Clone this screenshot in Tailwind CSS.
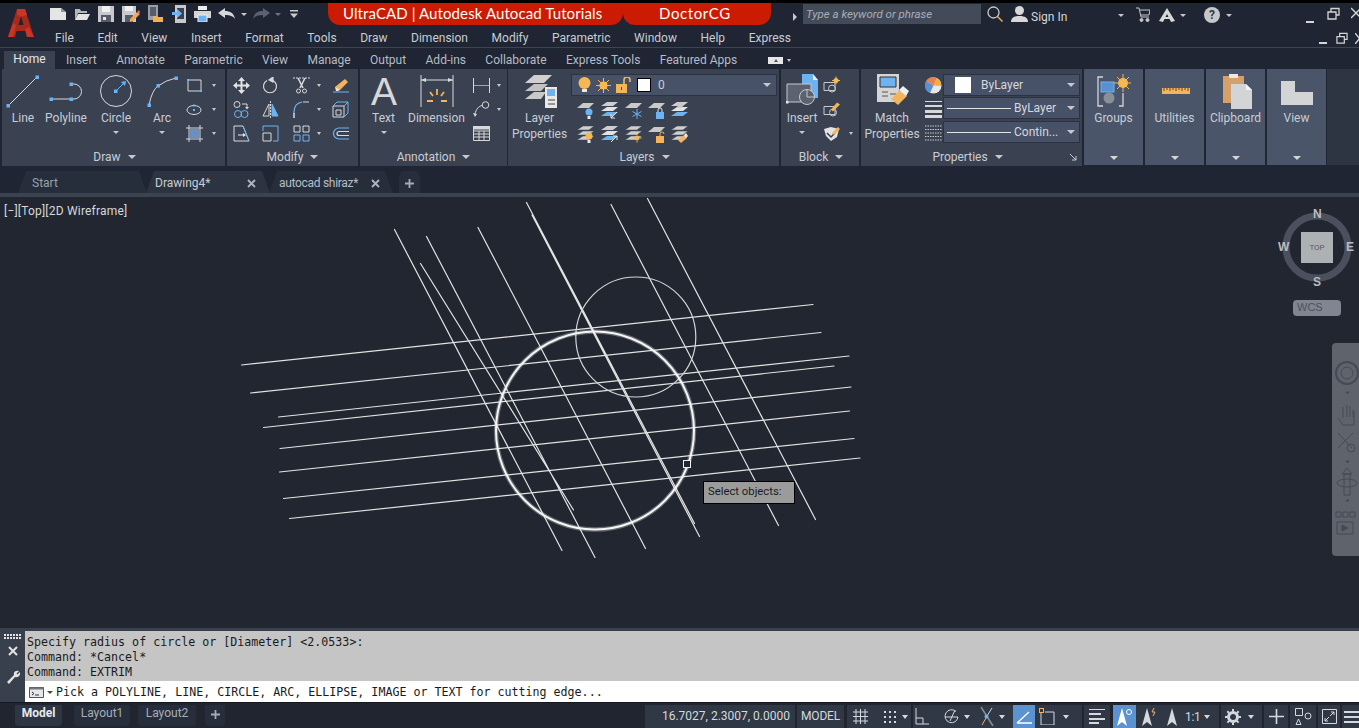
<!DOCTYPE html>
<html lang="en">
<head>
<meta charset="utf-8">
<title>AutoCAD</title>
<script src="https://cdn.jsdelivr.net/npm/@tailwindcss/browser@4"></script>
</head>
<body class="m-0 bg-[#212630]">
<svg width="0" height="0" class="absolute">
  <symbol id="slab" viewBox="0 0 17 17"><path d="M6 1h11l-5 5H0z" fill="#c9c9c9"/></symbol>
  <symbol id="stack" viewBox="0 0 17 17"><path d="M6 0h11l-5 4H0zM6 5h11l-5 4H0zM6 10h11l-5 4H0z" fill="#cfcfcf" stroke="#3a4252" stroke-width=".5"/></symbol>
  <symbol id="stackblue" viewBox="0 0 17 17"><path d="M6 0h11l-5 4H0z" fill="#cfcfcf"/><path d="M6 5h11l-5 4H0z" fill="#e3e3e3"/><path d="M6 10h11l-5 4H0z" fill="#6db3f2"/></symbol>
</svg>
<div class="relative w-[1359px] h-[728px] overflow-hidden flex flex-col bg-[#212630] text-[12px] leading-[16px] text-[#c8cdd5] font-['Roboto',sans-serif]">

  <!-- title + menu -->
  <div class="h-[3px] bg-black shrink-0"></div>
  <header class="flex h-[44px] shrink-0 bg-[#1f2532]">
    <div class="w-[50px] shrink-0 pl-[7px] pt-[5px]">
      <svg width="28" height="30" viewBox="0 0 28 30"><path d="M1 29 10 1h8l9 28h-7l-1.500-6h-9L8 29z" fill="#a9281c"/><path d="M11.500 17h5L14 8z" fill="#1f2532"/><path d="M10 1h8l2 6-7 2-3-3zM1 29l5-14 3 2-3 12zM20 29l-2-8 4-2 5 10z" fill="#c93527"/></svg>
    </div>
    <div class="flex-1 flex flex-col min-w-0">
      <div class="h-[23px] flex items-start relative whitespace-nowrap">
        <div class="flex items-center h-[22px] shrink-0">
          <svg class="w-[16px] h-[14px]" viewBox="0 0 16 14"><path d="M0 1h11l5 4v8H0z" fill="#e5e5e5"/><path d="M11 1l5 4h-5z" fill="#8f9299"/></svg>
          <svg class="w-[16px] h-[14px] ml-[8px]" viewBox="0 0 16 14"><path d="M1 2h5l1 2h6v2H4L1 13z" fill="#b5b7ba"/><path d="M4 7h12l-3 6H1z" fill="#e3e3e3"/></svg>
          <svg class="w-[16px] h-[16px] ml-[8px]" viewBox="0 0 16 16"><path d="M0 0h16v16H0z" fill="#c7c9cc"/><path d="M4 0h8v6H4z" fill="#f0f0f0"/><path d="M3 9h10v7H3z" fill="#565c68"/><path d="M5 11h3v3H5z" fill="#e5e5e5"/></svg>
          <svg class="w-[18px] h-[16px] ml-[8px]" viewBox="0 0 18 16"><path d="M0 0h14v16H0z" fill="#c7c9cc"/><path d="M3 0h8v5H3z" fill="#f0f0f0"/><path d="M3 9h8v7H3z" fill="#565c68"/><path d="M8 13l7-7 3 2-7 7-3 1z" fill="#f2a65a"/><path d="M15 6l2-2 1 2-1 2z" fill="#e06b60"/></svg>
          <svg class="w-[15px] h-[18px] ml-[8px]" viewBox="0 0 15 18"><path d="M0 0h10v15H0z" fill="#9a9da3"/><path d="M2 2h6v9H2z" fill="#565c68"/><path d="M5 11h4l1 1h5v5H5z" fill="#f2b04f"/></svg>
          <svg class="w-[14px] h-[18px] ml-[9px]" viewBox="0 0 14 18"><path d="M3 0h11v18H3z" fill="#c7c9cc"/><path d="M5 3h7v11H5z" fill="#3a4252"/><path d="M0 7h5V4l5 4.500-5 4.500v-3H0z" fill="#6db3f2"/></svg>
          <svg class="w-[17px] h-[16px] ml-[8px]" viewBox="0 0 17 16"><path d="M4 0h9v4H4z" fill="#eee"/><path d="M0 5h17v7H0z" fill="#d5d5d5"/><path d="M4 9h9v7H4z" fill="#6db3f2" stroke="#eee"/></svg>
          <svg class="w-[17px] h-[12px] ml-[7px]" viewBox="0 0 17 12"><path d="M0 5 7 0v3c5 0 9 2 10 8-2-3-5-4-10-4v3z" fill="#d5d7da"/></svg>
          <span class="w-0 h-0 ml-[6px] border-x-[3px] border-x-transparent border-t-[3px] border-t-[#c8c8c8]"></span>
          <svg class="w-[17px] h-[12px] ml-[6px] -scale-x-100" viewBox="0 0 17 12"><path d="M0 5 7 0v3c5 0 9 2 10 8-2-3-5-4-10-4v3z" fill="#5a6270"/></svg>
          <span class="w-0 h-0 ml-[5px] border-x-[3px] border-x-transparent border-t-[3px] border-t-[#6d7481]"></span>
          <svg class="w-[8px] h-[8px] ml-[9px]" viewBox="0 0 8 8"><path d="M0 0h8v1.500H0z" fill="#c8c8c8"/><path d="M0 3.500h8L4 8z" fill="#c8c8c8"/></svg>
        </div>
        <div class="ml-[30px] w-[295px] shrink-0 h-[22px] bg-[#cb1b02] rounded-b-[12px] pl-[15px] text-white text-[15px] leading-[21px] font-['Lato',sans-serif] tracking-[.1px]">UltraCAD | Autodesk Autocad Tutorials</div>
        <div class="w-[148px] shrink-0 h-[22px] bg-[#cb1b02] rounded-b-[12px] pl-[36px] text-white text-[15px] leading-[21px] font-['Lato',sans-serif] tracking-[.6px]">DoctorCG</div>
        <span class="ml-[22px] mt-[10px] w-0 h-0 border-y-[4px] border-y-transparent border-l-[4px] border-l-[#c8c8c8]"></span>
        <div class="ml-[6px] mt-[1px] w-[178px] shrink-0 h-[20px] bg-[#434b59] pl-[3px] italic text-[11.500px] leading-[20px] text-[#a9aeb6]">Type a keyword or phrase</div>
        <svg class="ml-[6px] mt-[3px] w-[16px] h-[16px] shrink-0" viewBox="0 0 16 16" fill="none"><circle cx="6.500" cy="6.500" r="5.500" stroke="#c8c8c8" stroke-width="1.300"/><path d="m10.500 10.500 5 5" stroke="#f0a94f" stroke-width="1.500"/></svg>
        <svg class="ml-[8px] mt-[3px] w-[17px] h-[16px] shrink-0" viewBox="0 0 17 16"><circle cx="8.500" cy="4.500" r="4.500" fill="#d8d8d8"/><path d="M0 16c0-4 3-6 8.500-6S17 12 17 16z" fill="#d8d8d8"/></svg>
        <span class="ml-[3px] mt-[6px] w-[38px] shrink-0 leading-[16px] text-[#d5d8dc]">Sign In</span>
        <span class="ml-[49px] mt-[11px] w-0 h-0 border-x-[3px] border-x-transparent border-t-[3px] border-t-[#c8c8c8]"></span>
        <svg class="ml-[12px] mt-[4px] w-[14px] h-[15px] shrink-0" viewBox="0 0 14 15" fill="none" stroke="#c8c8c8"><path d="M0 1h3l2 9h8M4 3h10l-1 5H5"/><circle cx="5.500" cy="13" r="1.500" fill="#c8c8c8"/><circle cx="11.500" cy="13" r="1.500" fill="#c8c8c8"/></svg>
        <svg class="ml-[9px] mt-[5px] w-[16px] h-[14px] shrink-0" viewBox="0 0 16 14"><path d="M8 0 0 13l4 1 4-8 4 8 4-1z" fill="#d8d8d8"/><path d="M3 9h10v2H3z" fill="#d8d8d8"/></svg>
        <span class="ml-[5px] mt-[11px] w-0 h-0 border-x-[3px] border-x-transparent border-t-[3px] border-t-[#c8c8c8]"></span>
        <span class="ml-[10px] mt-[2px] w-px h-[18px] bg-[#4b5362]"></span>
        <span class="ml-[8px] mt-[4px] w-[16px] h-[16px] shrink-0 rounded-full bg-[#c5c7ca] text-[#333a47] text-[12px] leading-[16px] font-bold text-center">?</span>
        <span class="ml-[6px] mt-[11px] w-0 h-0 border-x-[3px] border-x-transparent border-t-[3px] border-t-[#c8c8c8]"></span>
        <svg class="ml-[71px] mt-[6px] w-[12px] h-[14px] shrink-0" viewBox="0 0 12 14"><path d="M3 13h8" stroke="#d5d5d5" stroke-width="2"/></svg>
        <svg class="ml-[12px] mt-[4px] w-[13px] h-[13px] shrink-0" viewBox="0 0 13 13" fill="none" stroke="#d5d5d5" stroke-width="1.300"><path d="M1 5h8v7H1zM4 5V1.500h8V8H9"/></svg>
        <svg class="ml-[11px] mt-[4px] w-[10px] h-[12px] shrink-0" viewBox="0 0 10 12" stroke="#d5d5d5" stroke-width="1.500"><path d="M0 1l10 10M10 1 0 11"/></svg>
      </div>
      <div class="h-[21px] flex items-start gap-[23.600px] pl-[5px] pt-[4px] relative">
        <span>File</span><span>Edit</span><span>View</span><span>Insert</span><span>Format</span><span>Tools</span><span>Draw</span><span>Dimension</span><span>Modify</span><span>Parametric</span><span>Window</span><span>Help</span><span>Express</span>
        <div class="ml-auto mt-[2px] flex items-center">
          <svg class="w-[9px] h-[12px]" viewBox="0 0 9 12"><path d="M0 11h8" stroke="#d5d5d5" stroke-width="2"/></svg>
          <svg class="ml-[8px] w-[12px] h-[12px]" viewBox="0 0 13 13" fill="none" stroke="#d5d5d5" stroke-width="1.300"><path d="M1 5h8v7H1zM4 5V1.500h8V8H9"/></svg>
          <svg class="ml-[7px] w-[4px] h-[11px]" viewBox="0 0 4 11" stroke="#d5d5d5" stroke-width="1.400"><path d="M0 0l9 11M9 0 0 11"/></svg>
        </div>
      </div>
    </div>
  </header>
  <div class="h-px bg-[#3d4553] shrink-0"></div>

  <!-- ribbon tabs -->
  <nav class="h-[21px] shrink-0 flex items-end bg-[#1f2532] pl-[4px] text-[#b6bcc6]">
    <div class="w-[51px] h-[18px] bg-[#3a4252] text-center text-[#e4e7ea] leading-[17px]">Home</div>
    <div class="flex gap-[19.400px] ml-[11px] h-[18px] leading-[17px] items-center">
      <span>Insert</span><span>Annotate</span><span>Parametric</span><span>View</span><span>Manage</span><span>Output</span><span>Add-ins</span><span>Collaborate</span><span>Express Tools</span><span>Featured Apps</span>
    </div>
    <div class="ml-[31px] h-[18px] flex items-center">
      <span class="w-[15px] h-[7px] bg-[#e6e6e6] flex items-center justify-center"><span class="w-0 h-0 border-x-[2px] border-x-transparent border-b-[3px] border-b-[#555]"></span></span>
      <span class="ml-[4px] w-0 h-0 border-x-[2.500px] border-x-transparent border-t-[3px] border-t-[#c8c8c8]"></span>
    </div>
  </nav>

  <!-- ribbon -->
  <section class="h-[97px] shrink-0 flex pl-[2px] gap-[2px] bg-[#1f2532]">

    <!-- Draw -->
    <div class="w-[223px] bg-[#3a4252] flex flex-col">
      <div class="flex-1 flex pt-[5px]">
        <div class="w-[42px] flex flex-col items-center">
          <svg class="w-[42px] h-[36px]" viewBox="0 0 42 36"><path d="M6 32 35 3" stroke="#d8d8d8"/><rect x="4.500" y="30" width="3.500" height="3.500" fill="#6db3f2"/><rect x="33.500" y="1.500" width="3.500" height="3.500" fill="#6db3f2"/></svg>
          <span>Line</span>
        </div>
        <div class="w-[44px] flex flex-col items-center">
          <svg class="w-[44px] h-[36px]" viewBox="0 0 44 36" fill="none"><path d="M7 25h20M27 10h3a7.500 7.500 0 0 1 0 15h-3" stroke="#d8d8d8"/><rect x="5.500" y="23.500" width="3.500" height="3.500" fill="#6db3f2"/><rect x="25.500" y="23.500" width="3.500" height="3.500" fill="#6db3f2"/><rect x="25.500" y="8.500" width="3.500" height="3.500" fill="#6db3f2"/></svg>
          <span>Polyline</span>
        </div>
        <div class="w-[56px] flex flex-col items-center">
          <svg class="w-[56px] h-[36px]" viewBox="0 0 56 36" fill="none"><circle cx="28" cy="17" r="15.500" stroke="#d8d8d8"/><path d="M28 17l8-8" stroke="#6db3f2"/><path d="M38 7l-5 1 4 4z" fill="#6db3f2"/><rect x="26" y="15.500" width="3.500" height="3.500" fill="#6db3f2"/></svg>
          <span>Circle</span>
          <span class="mt-[5px] w-0 h-0 border-x-[3px] border-x-transparent border-t-[3px] border-t-[#c8c8c8]"></span>
        </div>
        <div class="w-[36px] flex flex-col items-center">
          <svg class="w-[36px] h-[36px]" viewBox="0 0 36 36" fill="none"><path d="M5 31Q8 16 14 12 22 6 32 4" stroke="#d8d8d8"/><rect x="3.500" y="29.500" width="3.500" height="3.500" fill="#6db3f2"/><rect x="12.500" y="10" width="3.500" height="3.500" fill="#6db3f2"/><rect x="30.500" y="2.500" width="3.500" height="3.500" fill="#6db3f2"/></svg>
          <span>Arc</span>
          <span class="mt-[5px] w-0 h-0 border-x-[3px] border-x-transparent border-t-[3px] border-t-[#c8c8c8]"></span>
        </div>
        <div class="pl-[6px] -mt-[1px] flex flex-col">
          <div class="h-[24px] flex items-center">
            <svg class="w-[17px] h-[17px]" viewBox="0 0 17 17" fill="none"><path d="M2 3h13v11H2z" stroke="#d8d8d8"/><path d="M1 2h2v2H1zM14 13h2v2h-2z" fill="#6db3f2"/></svg>
            <span class="ml-[9px] w-0 h-0 border-x-[2.500px] border-x-transparent border-t-[3px] border-t-[#c8c8c8]"></span>
          </div>
          <div class="h-[24px] flex items-center">
            <svg class="w-[17px] h-[17px]" viewBox="0 0 17 17" fill="none"><ellipse cx="8" cy="9" rx="7" ry="4.500" stroke="#d8d8d8"/><path d="M7 8h2v2H7zM7 3.500h2v2H7z" fill="#6db3f2"/></svg>
            <span class="ml-[9px] w-0 h-0 border-x-[2.500px] border-x-transparent border-t-[3px] border-t-[#c8c8c8]"></span>
          </div>
          <div class="h-[24px] flex items-center">
            <svg class="w-[17px] h-[17px]" viewBox="0 0 17 17" fill="none"><path d="M3 0v17M14 0v17M0 3h17M0 14h17" stroke="#d8d8d8"/><path d="M4 4h9v9H4z" fill="#6d8fbd"/></svg>
            <span class="ml-[9px] w-0 h-0 border-x-[2.500px] border-x-transparent border-t-[3px] border-t-[#c8c8c8]"></span>
          </div>
        </div>
      </div>
      <div class="h-[21px] pt-[2px] pl-[2px] flex items-center justify-center gap-[7px]">Draw <span class="w-0 h-0 border-x-[4px] border-x-transparent border-t-[4px] border-t-[#c8c8c8]"></span></div>
    </div>

    <!-- Modify -->
    <div class="w-[131px] bg-[#3a4252] flex flex-col">
      <div class="flex-1 grid grid-cols-[28px_30px_40px_30px] grid-rows-[24px_24px_24px] pt-[4px] items-center justify-items-center">
        <svg class="w-[17px] h-[17px]" viewBox="0 0 17 17" fill="#e3e3e3"><path d="M8.500 0 12 4H5zM8.500 17 5 13h7zM0 8.500 4 5v7zM17 8.500 13 12V5z"/><path d="M3 7.500h11v2H3z"/><path d="M7.500 3h2v11h-2z"/></svg>
        <svg class="w-[17px] h-[17px]" viewBox="0 0 17 17" fill="none" stroke="#d8d8d8" stroke-width="1.200"><path d="M5 3.500a6.500 6.500 0 1 0 6 0"/><path d="M11 0v5l-4-2z" fill="#d8d8d8"/></svg>
        <div class="justify-self-start flex items-center pl-[8px]">
          <svg class="w-[17px] h-[17px]" viewBox="0 0 17 17" fill="none" stroke="#d8d8d8"><path d="M0 1h17" stroke-dasharray="2 1"/><path d="M5 1l5 10M12 1 7 11" stroke-width="1.600"/><circle cx="5.500" cy="14" r="2"/><circle cx="11.500" cy="14" r="2"/></svg>
          <span class="ml-[7px] w-0 h-0 border-x-[2.500px] border-x-transparent border-t-[3px] border-t-[#c8c8c8]"></span>
        </div>
        <svg class="w-[17px] h-[17px]" viewBox="0 0 17 17"><path d="M1 15h16" stroke="#6db3f2" fill="none"/><path d="M3 10 13 2l3 3-8 8H5z" fill="#f3b45c"/><path d="M3 10l5 3-2 1H4z" fill="#e8e8e8"/></svg>

        <svg class="w-[17px] h-[17px]" viewBox="0 0 17 17" fill="none"><circle cx="4" cy="3.500" r="3" stroke="#d8d8d8"/><path d="M9 3h5v4" stroke="#d8d8d8"/><path d="m12 6 2 2.500L16 6z" fill="#d8d8d8"/><circle cx="5" cy="13" r="3.500" stroke="#6db3f2"/><circle cx="11.500" cy="13" r="3.500" stroke="#6db3f2"/></svg>
        <svg class="w-[17px] h-[17px]" viewBox="0 0 17 17" fill="none"><path d="M7 3 1 15h6z" stroke="#d8d8d8"/><path d="M10 3l6 12h-6z" stroke="#6db3f2" fill="#6db3f2"/><path d="M8.500 0v17" stroke="#d8d8d8" stroke-dasharray="2 1"/></svg>
        <div class="justify-self-start flex items-center pl-[8px]">
          <svg class="w-[17px] h-[17px]" viewBox="0 0 17 17" fill="none"><path d="M1 17V11C1 6 4 2 9 1" stroke="#6db3f2" stroke-width="1.200"/><path d="M1 17v-5M10 1h6" stroke="#d8d8d8" stroke-width="1.200"/></svg>
          <span class="ml-[7px] w-0 h-0 border-x-[2.500px] border-x-transparent border-t-[3px] border-t-[#c8c8c8]"></span>
        </div>
        <svg class="w-[17px] h-[17px]" viewBox="0 0 17 17" fill="none"><path d="M1 5h11v11H1zM4 9h5v5H4z" stroke="#d8d8d8"/><path d="M1 5l4-4h11v11l-4 4M12 5l4-4" stroke="#6db3f2"/></svg>

        <svg class="w-[17px] h-[17px]" viewBox="0 0 17 17" fill="none"><path d="M1 1h9l6 15H1z" stroke="#d8d8d8"/><path d="M10 1l6 15" stroke="#6db3f2"/><path d="M5 10h5" stroke="#e8e8e8"/><path d="M10 8v4l3-2z" fill="#e8e8e8"/></svg>
        <svg class="w-[17px] h-[17px]" viewBox="0 0 17 17" fill="none"><path d="M1 1h15v15h-5" stroke="#6db3f2"/><path d="M1 1v5" stroke="#6db3f2"/><path d="M1 8h8v8H1z" stroke="#d8d8d8"/></svg>
        <div class="justify-self-start flex items-center pl-[8px]">
          <svg class="w-[17px] h-[17px]" viewBox="0 0 17 17" fill="none"><path d="M1 1h6v6H1zM10 1h6v6h-6z" stroke="#d8d8d8"/><path d="M1 10h6v6H1zM10 10h6v6h-6z" stroke="#6db3f2"/></svg>
          <span class="ml-[7px] w-0 h-0 border-x-[2.500px] border-x-transparent border-t-[3px] border-t-[#c8c8c8]"></span>
        </div>
        <svg class="w-[17px] h-[17px]" viewBox="0 0 17 17" fill="none"><path d="M17 3H7a5.500 5.500 0 0 0 0 11h10" stroke="#6db3f2" stroke-width="1.200"/><path d="M17 6.500H7a2 2 0 0 0 0 4h10" stroke="#d8d8d8" stroke-width="1.200"/></svg>
      </div>
      <div class="h-[21px] pt-[2px] flex items-center justify-center gap-[7px]">Modify <span class="w-0 h-0 border-x-[4px] border-x-transparent border-t-[4px] border-t-[#c8c8c8]"></span></div>
    </div>

    <!-- Annotation -->
    <div class="w-[147px] bg-[#3a4252] flex flex-col">
      <div class="flex-1 flex pt-[5px]">
        <div class="w-[47px] flex flex-col items-center">
          <svg class="w-[34px] h-[36px] overflow-visible" viewBox="0 0 34 36"><text x="17" y="31" text-anchor="middle" font-size="39" fill="#d8d8d8" font-family="Liberation Sans, sans-serif">A</text></svg>
          <span>Text</span>
          <span class="mt-[5px] w-0 h-0 border-x-[3px] border-x-transparent border-t-[3px] border-t-[#c8c8c8]"></span>
        </div>
        <div class="w-[59px] flex flex-col items-center">
          <svg class="w-[34px] h-[36px]" viewBox="0 0 34 36" fill="none"><path d="M1 1v32M33 1v32" stroke="#d8d8d8"/><path d="M1 6h32" stroke="#d8d8d8"/><path d="M1 6l5-2v4zM33 6l-5-2v4z" fill="#d8d8d8"/><path d="M17 15v6M10 18l3 4M24 18l-3 4M7 27h6M21 27h6" stroke="#f3b45c" stroke-width="1.800"/></svg>
          <span>Dimension</span>
        </div>
        <div class="pl-[7px] -mt-[1px] flex flex-col">
          <div class="h-[24px] flex items-center">
            <svg class="w-[17px] h-[17px]" viewBox="0 0 17 17" fill="none"><path d="M.5 1v15M16.500 1v15" stroke="#d8d8d8"/><path d="M1 8.500h15" stroke="#6db3f2"/></svg>
            <span class="ml-[7px] w-0 h-0 border-x-[2.500px] border-x-transparent border-t-[3px] border-t-[#c8c8c8]"></span>
          </div>
          <div class="h-[24px] flex items-center">
            <svg class="w-[17px] h-[17px]" viewBox="0 0 17 17" fill="none"><circle cx="12.500" cy="4" r="3.300" stroke="#d8d8d8"/><path d="M9 4.500C6 5 3 8 2 13" stroke="#d8d8d8"/><path d="M0 12l2 4 2-3z" fill="#d8d8d8"/></svg>
            <span class="ml-[7px] w-0 h-0 border-x-[2.500px] border-x-transparent border-t-[3px] border-t-[#c8c8c8]"></span>
          </div>
          <div class="h-[24px] flex items-center">
            <svg class="w-[17px] h-[15px]" viewBox="0 0 17 15" fill="none" stroke="#d8d8d8"><path d="M.5.500h16v14H.5zM.5 5h16M.5 8h16M.5 11h16M6 5v10M11 5v10"/><path d="M0 0h17v3H0z" fill="#d8d8d8"/></svg>
          </div>
        </div>
      </div>
      <div class="h-[21px] pt-[2px] flex items-center justify-center gap-[7px]">Annotation <span class="w-0 h-0 border-x-[4px] border-x-transparent border-t-[4px] border-t-[#c8c8c8]"></span></div>
    </div>

    <!-- Layers -->
    <div class="w-[271px] -ml-[1px] bg-[#3a4252] flex flex-col">
      <div class="flex-1 flex pt-[5px]">
        <div class="w-[63px] flex flex-col items-center">
          <svg class="w-[34px] h-[36px]" viewBox="0 0 34 36"><path d="M11 1h18l-8 8H2z" fill="#d0d0d0"/><path d="M11 10h14l-7 7H2z" fill="#c2c2c2"/><path d="M11 18h12l-5 7H2z" fill="#c9c9c9"/><path d="M22 13h12v21H22z" fill="#e8e8e8"/><path d="M24 15h8v7h-8z" fill="#6db3f2"/><path d="M25 26h7M25 30h7" stroke="#444"/></svg>
          <span class="text-center">Layer<br>Properties</span>
        </div>
        <div class="flex-1 flex flex-col">
          <div class="h-[22px] w-[206px] bg-[#475268] border border-[#2b3240] flex items-center pl-[6px] pr-[5px]">
            <svg class="w-[13px] h-[16px]" viewBox="0 0 13 16"><circle cx="6.500" cy="6" r="6" fill="#f5b854"/><path d="M4 12h5v3H4z" fill="#e8e8e8"/></svg>
            <svg class="ml-[5px] w-[15px] h-[15px]" viewBox="0 0 15 15"><circle cx="7.500" cy="7.500" r="4" fill="#f5b854"/><path d="M7.500 0v15M0 7.500h15M2 2l11 11M13 2 2 13" stroke="#f5b854"/></svg>
            <svg class="ml-[5px] w-[15px] h-[16px]" viewBox="0 0 15 16" fill="none"><path d="M0 7h11v9H0z" fill="#f3b45c"/><path d="M8 7V3a3 3 0 0 1 6 0v2" stroke="#f3b45c" stroke-width="1.600"/><path d="M5 10h1v3H5z" fill="#444"/></svg>
            <span class="ml-[6px] w-[14px] h-[14px] bg-white border border-black"></span>
            <span class="ml-[7px]">0</span>
            <span class="ml-auto w-0 h-0 border-x-[4px] border-x-transparent border-t-[4px] border-t-[#c8c8c8]"></span>
          </div>
          <div class="mt-[2px] pl-[3px] grid grid-cols-[23px_24px_24px_23px_23px] grid-rows-[24px_24px] items-center justify-items-center">
            <svg class="w-[17px] h-[17px]" viewBox="0 0 17 17"><use href="#slab"/><circle cx="12" cy="10" r="3.500" fill="#6db3f2"/><path d="M10.500 14h3v3h-3z" fill="#e8e8e8"/></svg>
            <svg class="w-[17px] h-[17px]" viewBox="0 0 17 17"><use href="#stackblue"/><path d="M16 10l-6 6M10 12v4h4" stroke="#e8e8e8" fill="none"/></svg>
            <svg class="w-[17px] h-[17px]" viewBox="0 0 17 17"><use href="#slab"/><path d="M12 7v10M7.500 9.500l9 5M16.500 9.500l-9 5" stroke="#6db3f2"/></svg>
            <svg class="w-[17px] h-[17px]" viewBox="0 0 17 17"><use href="#slab"/><path d="M8 10h8v7H8z" fill="#6db3f2"/><path d="M10 10V8a2 2 0 0 1 4 0v2" stroke="#e8e8e8" fill="none"/></svg>
            <svg class="w-[17px] h-[17px]" viewBox="0 0 17 17"><use href="#stackblue"/><circle cx="9" cy="3" r="3" fill="#c9c9c9"/></svg>
            <svg class="w-[17px] h-[17px]" viewBox="0 0 17 17"><use href="#stack"/><circle cx="12" cy="10" r="3.500" fill="#f5b854"/><path d="M10.500 14h3v3h-3z" fill="#e8e8e8"/></svg>
            <svg class="w-[17px] h-[17px]" viewBox="0 0 17 17"><use href="#stackblue"/><path d="M10 16l6-6M12 10h4v4" stroke="#e8e8e8" fill="none"/></svg>
            <svg class="w-[17px] h-[17px]" viewBox="0 0 17 17"><use href="#stack"/><circle cx="12" cy="12" r="2.500" fill="#f5b854"/><path d="M12 7.500v9M7.500 12h9" stroke="#f5b854" stroke-dasharray="1.500 1"/></svg>
            <svg class="w-[17px] h-[17px]" viewBox="0 0 17 17"><use href="#slab"/><path d="M8 10h8v7H8z" fill="#f3b45c"/><path d="M12 10V8a2 2 0 0 1 4 0" stroke="#f3b45c" fill="none"/></svg>
            <svg class="w-[17px] h-[17px]" viewBox="0 0 17 17"><use href="#stack"/><path d="M7 14l6-5 3 3-6 5z" fill="#f3b45c"/><path d="M13 9l2-2 2 3-2 2z" fill="#e8e8e8"/></svg>
          </div>
        </div>
      </div>
      <div class="h-[21px] pt-[2px] pl-[2px] flex items-center justify-center gap-[7px]">Layers <span class="w-0 h-0 border-x-[4px] border-x-transparent border-t-[4px] border-t-[#c8c8c8]"></span></div>
    </div>

    <!-- Block -->
    <div class="w-[78px] bg-[#3a4252] flex flex-col">
      <div class="flex-1 flex pt-[5px]">
        <div class="w-[42px] flex flex-col items-center">
          <svg class="w-[34px] h-[36px]" viewBox="0 0 34 36"><path d="M17 0h11l5 6v18H24l-7-6z" fill="#6db3f2"/><path d="M28 0l5 6h-5z" fill="#e8e8e8"/><path d="M2 10h24v18H2z" fill="#5b6270" stroke="#c8c8c8"/><circle cx="22" cy="23" r="7.500" fill="#5b6270" stroke="#c8c8c8"/><path d="M22 16v7h7" stroke="#c8c8c8" fill="none"/><path d="M1 27h2.500v2.500H1z" fill="#e8e8e8"/></svg>
          <span>Insert</span>
          <span class="mt-[5px] w-0 h-0 border-x-[3px] border-x-transparent border-t-[3px] border-t-[#c8c8c8]"></span>
        </div>
        <div class="-mt-[1px] flex flex-col">
          <svg class="w-[17px] h-[24px] py-[3px]" viewBox="0 0 17 17" fill="none"><path d="M1 6h11v8H1z" stroke="#c8c8c8"/><circle cx="9" cy="12" r="3.500" stroke="#c8c8c8"/><circle cx="13" cy="4" r="2.500" fill="#f5b854"/><path d="M13 0v8M9 4h8" stroke="#f5b854"/></svg>
          <svg class="w-[17px] h-[24px] py-[3px]" viewBox="0 0 17 17" fill="none"><path d="M1 6h11v8H1z" stroke="#c8c8c8"/><circle cx="10" cy="12" r="3.500" stroke="#c8c8c8"/><path d="M8 9l6-7 3 2-7 7z" fill="#f3b45c"/></svg>
          <div class="h-[24px] flex items-center">
            <svg class="w-[17px] h-[17px]" viewBox="0 0 17 17"><path d="M1 4l7-2 8 2-2 8-6 4-5-5z" fill="#e3e3e3"/><path d="M4 8l4 4 4-4" stroke="#3a4252" fill="none" stroke-width="1.500"/><path d="M9 8l6-6 2 2-6 6z" fill="#f3b45c"/></svg>
            <span class="ml-[9px] w-0 h-0 border-x-[2.500px] border-x-transparent border-t-[3px] border-t-[#c8c8c8]"></span>
          </div>
        </div>
      </div>
      <div class="h-[21px] pt-[2px] pl-[2px] flex items-center justify-center gap-[7px]">Block <span class="w-0 h-0 border-x-[4px] border-x-transparent border-t-[4px] border-t-[#c8c8c8]"></span></div>
    </div>

    <!-- Properties -->
    <div class="relative w-[221px] bg-[#3a4252] flex flex-col">
      <div class="flex-1 flex pt-[5px]">
        <div class="w-[62px] flex flex-col items-center">
          <svg class="w-[34px] h-[36px]" viewBox="0 0 34 36"><path d="M2 0h22v28H2z" fill="#d5d5d5"/><path d="M5 3h16v10H5z" fill="#6db3f2" stroke="#333"/><path d="M7 18h6M7 22h6M15 20h6" stroke="#555"/><path d="M16 25l9-9 7 6-9 9z" fill="#f3b45c"/><path d="M24 16l4-4 6 5-3 5z" fill="#f0f0f0"/></svg>
          <span class="text-center">Match<br>Properties</span>
        </div>
        <div class="w-[20px] -mt-[1px] flex flex-col items-center">
          <svg class="w-[17px] h-[24px] pt-[1px]" viewBox="0 0 17 17"><circle cx="8.500" cy="8.500" r="8" fill="#e8e8e8"/><path d="M8.500 8.500 1 4a8 8 0 0 1 11-3z" fill="#e8834f"/><path d="M8.500 8.500 1 4a8 8 0 0 0 4 12z" fill="#5a8fd0"/><path d="M8.500 8.500 12 1a8 8 0 0 1 4 8z" fill="#f0b040"/></svg>
          <svg class="w-[17px] h-[24px] py-[2px]" viewBox="0 0 17 18"><path d="M0 1h17v1H0zM0 5h17v2H0zM0 10h17v3H0zM0 15h17v3H0z" fill="#d8d8d8"/></svg>
          <svg class="w-[17px] h-[24px] py-[3px]" viewBox="0 0 17 17" stroke="#c8c8c8" fill="none"><path d="M0 1.500h17M0 5h17M0 8.500h17M0 12h17M0 15.500h17" stroke-dasharray="1.500 1"/></svg>
        </div>
        <div class="flex flex-col gap-[1px] w-[137px]">
          <div class="h-[22px] bg-[#475268] border border-[#2b3240] flex items-center pl-[11px] pr-[4px]">
            <span class="w-[16px] h-[16px] bg-white"></span><span class="ml-[10px] text-[#d5d8dc]">ByLayer</span>
            <span class="ml-auto w-0 h-0 border-x-[4px] border-x-transparent border-t-[4px] border-t-[#c8c8c8]"></span>
          </div>
          <div class="h-[22px] bg-[#475268] border border-[#2b3240] flex items-center pl-[3px] pr-[4px]">
            <span class="w-[64px] h-px bg-[#e5e5e5]"></span><span class="ml-[3px] text-[#d5d8dc]">ByLayer</span>
            <span class="ml-auto w-0 h-0 border-x-[4px] border-x-transparent border-t-[4px] border-t-[#c8c8c8]"></span>
          </div>
          <div class="h-[22px] mt-[1px] bg-[#475268] border border-[#2b3240] flex items-center pl-[3px] pr-[4px]">
            <span class="w-[64px] h-px bg-[#e5e5e5]"></span><span class="ml-[3px] text-[#d5d8dc]">Contin...</span>
            <span class="ml-auto w-0 h-0 border-x-[4px] border-x-transparent border-t-[4px] border-t-[#c8c8c8]"></span>
          </div>
        </div>
      </div>
      <div class="h-[21px] pt-[2px] flex items-center justify-center gap-[7px] pr-[8px]">Properties <span class="w-0 h-0 border-x-[4px] border-x-transparent border-t-[4px] border-t-[#c8c8c8]"></span></div>
      <svg class="absolute right-[5px] bottom-[5px] w-[7px] h-[7px]" viewBox="0 0 7 7" fill="none" stroke="#c8c8c8"><path d="M0 0l6 6M6 2v4H2"/></svg>
    </div>

    <!-- Collapsed panels -->
    <div class="w-[59px] h-[96px] bg-[#4a5569] flex flex-col items-center pt-[4px]">
      <svg class="w-[34px] h-[36px]" viewBox="0 0 34 36" fill="none"><path d="M6 4H1v29h5M22 33h4V20" stroke="#d5d5d5" stroke-width="1.300"/><rect x="4" y="9" width="13" height="10" fill="#5a8fd0" stroke="#6db3f2"/><circle cx="12" cy="25" r="5.500" fill="#8a8f98"/><circle cx="26" cy="10" r="5" fill="#f5b854"/><path d="M26 1v18M17 10h17M20 4l12 12M32 4 20 16" stroke="#f5b854"/></svg>
      <span class="mt-[1px]">Groups</span>
      <span class="mt-auto mb-[5px] w-0 h-0 border-x-[4px] border-x-transparent border-t-[4px] border-t-[#d5d5d5]"></span>
    </div>
    <div class="w-[59px] h-[96px] bg-[#4a5569] flex flex-col items-center pt-[4px]">
      <svg class="w-[34px] h-[36px]" viewBox="0 0 34 36"><path d="M4 15h28v6H4z" fill="#f3b45c"/><path d="M6 15v3M9 15v2M12 15v3M15 15v2M18 15v3M21 15v2M24 15v3M27 15v2M30 15v3" stroke="#6a4c20"/></svg>
      <span class="mt-[1px]">Utilities</span>
      <span class="mt-auto mb-[5px] w-0 h-0 border-x-[4px] border-x-transparent border-t-[4px] border-t-[#d5d5d5]"></span>
    </div>
    <div class="w-[59px] h-[96px] bg-[#4a5569] flex flex-col items-center pt-[4px]">
      <svg class="w-[34px] h-[36px]" viewBox="0 0 34 36"><path d="M4 3h21v27H4z" fill="#d6a06b"/><path d="M10 1h9v4h-9z" fill="#e8e8e8"/><path d="M12 11h15l6 6v19H12z" fill="#d2d4d6"/><path d="M27 11l6 6h-6z" fill="#f5f5f5"/></svg>
      <span class="mt-[1px]">Clipboard</span>
      <span class="mt-auto mb-[5px] w-0 h-0 border-x-[4px] border-x-transparent border-t-[4px] border-t-[#d5d5d5]"></span>
    </div>
    <div class="w-[59px] h-[96px] bg-[#4a5569] flex flex-col items-center pt-[4px]">
      <svg class="w-[34px] h-[36px]" viewBox="0 0 34 36"><path d="M1 8h14v11h18v13H1z" fill="#d2d4d6"/></svg>
      <span class="mt-[1px]">View</span>
      <span class="mt-auto mb-[5px] w-0 h-0 border-x-[4px] border-x-transparent border-t-[4px] border-t-[#d5d5d5]"></span>
    </div>
    <div class="flex-1 h-[96px] -ml-[1px] bg-[#2e3542]"></div>
  </section>

  <!-- document tabs -->
  <div class="h-[27px] shrink-0 flex items-end bg-[#1f2532] pl-[18px] text-[#b6bcc6] border-b-[4px] border-b-[#3b4350] box-content">
    <div class="w-[129px] h-[22px] bg-[#272e3b] [clip-path:polygon(8px_0,calc(100%-8px)_0,100%_100%,0_100%)] pl-[14px] pt-[2px] leading-[21px] text-[#9aa1ac]">Start</div>
    <div class="ml-[-1px] w-[124px] h-[22px] pt-[2px] bg-[#2d3441] [clip-path:polygon(8px_0,calc(100%-8px)_0,100%_100%,0_100%)] pl-[9px] pr-[14px] flex items-center justify-between text-[#c8cdd5]">Drawing4*<svg class="w-[9px] h-[9px]" viewBox="0 0 9 9" stroke="#b0b5bd" stroke-width="1.800"><path d="M1 1l7 7M8 1 1 8"/></svg></div>
    <div class="ml-[-1px] w-[124px] h-[22px] pt-[2px] bg-[#272e3b] [clip-path:polygon(8px_0,calc(100%-8px)_0,100%_100%,0_100%)] pl-[10px] pr-[13px] flex items-center justify-between tracking-[-.3px]">autocad shiraz*<svg class="w-[9px] h-[9px]" viewBox="0 0 9 9" stroke="#b0b5bd" stroke-width="1.800"><path d="M1 1l7 7M8 1 1 8"/></svg></div>
    <div class="ml-[6px] w-[21px] h-[22px] pt-[2px] bg-[#272e3b] rounded-t-[6px] flex items-center justify-center"><svg class="w-[9px] h-[9px]" viewBox="0 0 9 9" stroke="#a5abb5" stroke-width="1.800"><path d="M4.500 0v9M0 4.500h9"/></svg></div>
  </div>

  <!-- drawing canvas -->
  <main class="relative h-[431px] shrink-0 bg-[#212630]">
    <svg class="block w-[1359px] h-[431px]" viewBox="0 197 1359 431" fill="none" stroke-linecap="round">
      <g stroke="#e2e2e2" stroke-width="1.200">
        <path d="M241.500 365 813 304.500M250.500 393 821 332.500M278.500 417 849 356M263.500 427.500 834 366M280 448.500 851 387M279.500 472 849.500 411M283.500 498.500 854 438.500M289.500 518.500 860 458"/>
        <path d="M394.500 229.500 562 550.500M426.500 236.500 595 557.500M420.500 263.500 573.500 510M478 227.500 645.500 548.500M526.500 202.500 694.500 523.500M532 215 699.500 536.500M611 204.500 778.500 525.500M647.500 198.500 815.500 519.500"/>
      </g>
      <circle cx="635.800" cy="337" r="60" stroke="#d5d5d5" stroke-width="1.200"/>
      <circle cx="595" cy="430.500" r="99" stroke="#ffffff" stroke-opacity=".3" stroke-width="4.500"/>
      <circle cx="595" cy="430.500" r="99" stroke="#f5f5f5" stroke-width="2"/>
      <rect x="683.500" y="460.500" width="7" height="7" stroke="#f0f0f0" fill="#212630" stroke-width="1"/>
    </svg>
    <span class="absolute left-[4px] top-[6px] text-[#d5d8dc] tracking-[.2px]">[−][Top][2D Wireframe]</span>
    <div class="absolute left-[703px] top-[284px] w-[92px] h-[23px] bg-[#9b9b9b] border border-black pl-[4px] leading-[20px] text-[#1c1c1c] text-[11.300px]">Select objects:</div>

    <!-- view cube -->
    <div class="absolute left-[1278px] top-[10px] w-[78px] h-[80px]">
      <svg class="absolute inset-0" width="78" height="80" viewBox="0 0 78 80" fill="none"><circle cx="39" cy="40" r="31" stroke="#4a505d" stroke-width="7"/></svg>
      <div class="absolute left-[23px] top-[25px] w-[32px] h-[31px] bg-[#aeb1b4] text-[#565c66] text-[8px] leading-[31px] text-center">TOP</div>
      <span class="absolute left-[35px] -top-[1px] text-[12px] font-bold text-[#b9bcc1] font-['Liberation_Sans',sans-serif]">N</span>
      <span class="absolute left-[35px] top-[67px] text-[12px] font-bold text-[#b9bcc1] font-['Liberation_Sans',sans-serif]">S</span>
      <span class="absolute left-0 top-[32px] text-[12px] font-bold text-[#b9bcc1] font-['Liberation_Sans',sans-serif]">W</span>
      <span class="absolute left-[68px] top-[32px] text-[12px] font-bold text-[#b9bcc1] font-['Liberation_Sans',sans-serif]">E</span>
    </div>
    <div class="absolute left-[1293px] top-[103px] w-[48px] h-[16px] rounded-[4px] bg-[#7f8591] pl-[4px] text-[11px] leading-[15px] text-[#4c525e] font-['Liberation_Sans',sans-serif]">WCS</div>

    <!-- navigation bar -->
    <div class="absolute left-[1332px] top-[146px] w-[27px] h-[213px] bg-[#5e636c] rounded-l-[4px]">
      <svg class="block" width="27" height="213" viewBox="1332 343 27 213" fill="none" stroke="#454b56">
        <circle cx="1347" cy="373" r="11" stroke-width="2"/><circle cx="1347" cy="373" r="6"/>
        <path d="M1346 392h3l-1.500 2z" fill="#454b56"/>
        <path d="M1338 418l5 7h11v-14M1343 418v-11M1347 417v-12M1350 417v-11M1353 417v-7"/>
        <path d="M1338 433l14 15M1353 433l-15 15"/><circle cx="1351" cy="448" r="4"/>
        <path d="M1346 461h3l-1.500 2z" fill="#454b56"/>
        <path d="M1344 495v-21h6v21zM1347 468l-5 6h10z"/><ellipse cx="1347" cy="483" rx="10" ry="4"/>
        <path d="M1346 500h3l-1.500 2z" fill="#454b56"/>
        <path d="M1336 512h5v5h-5zM1343 512h5v5h-5zM1350 512h5v5h-5zM1337 522h16v12h-16z"/><path d="M1342 525l6 3-6 3z" fill="#454b56"/>
      </svg>
    </div>
  </main>

  <!-- command line -->
  <section class="h-[74px] shrink-0 flex bg-[#38404e]">
    <div class="w-[25px] pt-[6px] flex flex-col items-center">
      <svg class="w-[18px] h-[5px]" viewBox="0 0 18 5" fill="#e3e3e3"><path d="M0 0h2v2H0zM3 0h2v2H3zM6 0h2v2H6zM9 0h2v2H9zM12 0h2v2h-2zM15 0h2v2h-2zM0 3h2v2H0zM3 3h2v2H3zM6 3h2v2H6zM9 3h2v2H9zM12 3h2v2h-2zM15 3h2v2h-2z"/></svg>
      <svg class="mt-[7px] w-[10px] h-[10px]" viewBox="0 0 10 10" stroke="#e3e3e3" stroke-width="2"><path d="M1 1l8 8M9 1 1 9"/></svg>
      <svg class="mt-[14px] w-[14px] h-[14px]" viewBox="0 0 14 14"><path d="M1 12 8 5c-1-3 2-5 5-4l-2.500 2.500 1 1L14 2c1 3-2 6-5 5l-6 7z" fill="#e3e3e3"/></svg>
    </div>
    <div class="flex-1 pt-[3px] flex flex-col font-['DejaVu_Sans_Mono',monospace] text-[11.650px] text-[#1a1a1a]">
      <div class="h-[50px] bg-[#c5c5c5] pl-[2px] leading-[15px] pt-[4px] whitespace-pre">Specify radius of circle or [Diameter] &lt;2.0533&gt;:
Command: *Cancel*
Command: EXTRIM</div>
      <div class="h-[21px] bg-white flex items-center pl-[4px] pt-[1px] whitespace-nowrap">
        <svg class="w-[15px] h-[11px] shrink-0" viewBox="0 0 15 11" fill="none"><path d="M.5.500h14v10H.5z" stroke="#555" fill="#e4e8ee"/><path d="M.5.500h14v2H.5z" fill="#777"/><path d="M3 5l2 1.500L3 8M6 8h4" stroke="#333"/></svg>
        <span class="ml-[3px] w-0 h-0 border-x-[3px] border-x-transparent border-t-[3px] border-t-[#444]"></span>
        <span class="ml-[3px]">Pick a POLYLINE, LINE, CIRCLE, ARC, ELLIPSE, IMAGE or TEXT for cutting edge...</span>
      </div>
    </div>
  </section>

  <!-- status bar -->
  <footer class="h-[26px] shrink-0 flex items-end bg-[#20252f] border-t border-t-[#14181f]">
    <div class="flex items-start h-[23px] pl-[15px] text-[#a6adb8]">
      <div class="w-[47px] h-[21px] bg-[#2e3644] rounded-b-[4px] text-center font-bold leading-[17px] text-[#e8eaed]">Model</div>
      <div class="ml-[12px] w-[56px] h-[21px] bg-[#272e3b] rounded-b-[4px] text-center leading-[17px]">Layout1</div>
      <div class="ml-[8px] w-[58px] h-[21px] bg-[#272e3b] rounded-b-[4px] text-center leading-[17px]">Layout2</div>
      <div class="ml-[9px] w-[20px] h-[21px] bg-[#272e3b] rounded-b-[4px] flex items-center justify-center pb-[3px]"><svg class="w-[9px] h-[9px]" viewBox="0 0 9 9" stroke="#a5abb5" stroke-width="1.800"><path d="M4.500 0v9M0 4.500h9"/></svg></div>
    </div>
    <div class="ml-auto flex h-[23px] text-[#d5d8dc] gap-[2px]">
      <div class="w-[150px] bg-[#303846] text-right pr-[5px] leading-[23px] whitespace-nowrap">16.7027, 2.3007, 0.0000</div>
      <div class="w-[47px] bg-[#303846] text-center leading-[23px] tracking-[-.2px]">MODEL</div>
      <div class="w-[64px] ml-[1px] bg-[#303846] flex items-center pl-[6px]">
        <svg class="w-[15px] h-[15px]" viewBox="0 0 15 15" stroke="#d5d8dc"><path d="M3 0v15M7.500 0v15M12 0v15M0 3h15M0 7.500h15M0 12h15"/></svg>
        <svg class="ml-[15px] w-[13px] h-[13px]" viewBox="0 0 13 13" fill="#d5d8dc"><path d="M1 1h2v2H1zM6 1h2v2H6zM11 1h2v2h-2zM1 6h2v2H1zM6 6h2v2H6zM11 6h2v2h-2zM1 11h2v2H1zM6 11h2v2H6zM11 11h2v2h-2z"/></svg>
        <span class="ml-[6px] w-0 h-0 border-x-[3px] border-x-transparent border-t-[4px] border-t-[#d5d8dc]"></span>
      </div>
      <div class="w-[169px] bg-[#303846] flex items-center relative">
        <svg class="ml-[2px] w-[15px] h-[17px]" viewBox="0 0 15 17" fill="none" stroke="#d5d8dc"><path d="M1 0v16h13M1 10h7v6"/></svg>
        <svg class="ml-[14px] w-[15px] h-[15px]" viewBox="0 0 15 15" fill="none" stroke="#d5d8dc"><path d="M12 2.500A6.500 6.500 0 1 0 14 8H1M11 1 6 12" /></svg>
        <span class="ml-[5px] w-0 h-0 border-x-[3px] border-x-transparent border-t-[4px] border-t-[#d5d8dc]"></span>
        <svg class="ml-[9px] w-[15px] h-[19px]" viewBox="0 0 15 19" fill="none"><path d="M2 0l12 19" stroke="#8b8f96" stroke-width="1.500"/><path d="M13 1 8 9" stroke="#d5d8dc"/><circle cx="7.500" cy="9.500" r="2" fill="#6db3f2"/><path d="M7 11 3 18" stroke="#f3b45c"/></svg>
        <span class="ml-[5px] w-0 h-0 border-x-[3px] border-x-transparent border-t-[4px] border-t-[#d5d8dc]"></span>
        <div class="ml-[8px] w-[22px] h-[23px] bg-[#5a93cf] flex items-center justify-center"><svg class="w-[16px] h-[14px]" viewBox="0 0 16 14" fill="none" stroke="#fff" stroke-width="1.300"><path d="M1 13h15M1 13 13 2"/></svg></div>
        <svg class="ml-[4px] w-[16px] h-[17px]" viewBox="0 0 16 17" fill="none"><path d="M2 4v13h13V4H6" stroke="#d5d8dc"/><rect x=".5" y=".5" width="4" height="4" stroke="#f3b45c"/></svg>
        <span class="ml-[8px] w-0 h-0 border-x-[3px] border-x-transparent border-t-[4px] border-t-[#d5d8dc]"></span>
      </div>
      <div class="w-[26px] bg-[#303846] flex items-center justify-center">
        <svg class="w-[16px] h-[15px]" viewBox="0 0 16 15" fill="#d5d8dc"><path d="M0 0h16v1H0zM0 4h12v2H0zM0 9h16v2H0zM0 13h10v2H0z"/></svg>
      </div>
      <div class="w-[106px] ml-[1px] bg-[#303846] flex items-center">
        <div class="w-[23px] h-[23px] bg-[#5a93cf] flex items-center justify-center"><svg class="w-[17px] h-[18px]" viewBox="0 0 17 18"><path d="M6 0 1 18l5-4 5 4z" fill="#fff"/><circle cx="13" cy="4" r="2.500" fill="none" stroke="#fff"/></svg></div>
        <svg class="ml-[5px] w-[16px] h-[18px]" viewBox="0 0 16 18"><path d="M6 0 1 18l5-4 5 4z" fill="#d5d8dc"/><path d="M13 0l-2 4h3l-2 4" stroke="#f3b45c" fill="none"/></svg>
        <svg class="ml-[8px] w-[14px] h-[18px]" viewBox="0 0 14 18"><path d="M7 0 2 18l5-4 5 4z" fill="#d5d8dc"/></svg>
        <span class="ml-[6px] text-[12px] tracking-[-.3px]">1:1</span>
        <span class="ml-[3px] w-0 h-0 border-x-[3px] border-x-transparent border-t-[4px] border-t-[#d5d8dc]"></span>
      </div>
      <div class="w-[41px] bg-[#303846] flex items-center pl-[4px]">
        <svg class="w-[16px] h-[16px]" viewBox="0 0 16 16" fill="none"><circle cx="8" cy="8" r="4.500" stroke="#d5d8dc" stroke-width="3"/><path d="M8 0v16M0 8h16M2.300 2.300l11.400 11.400M13.700 2.300 2.300 13.700" stroke="#d5d8dc" stroke-width="2" stroke-dasharray="2.500 11"/></svg>
        <span class="ml-[7px] w-0 h-0 border-x-[3px] border-x-transparent border-t-[4px] border-t-[#d5d8dc]"></span>
      </div>
      <div class="w-[24px] bg-[#303846] flex items-center justify-center"><svg class="w-[15px] h-[15px]" viewBox="0 0 15 15" stroke="#d5d8dc" stroke-width="1.600"><path d="M7.500 0v15M0 7.500h15"/></svg></div>
      <div class="w-[26px] bg-[#303846] flex items-center justify-center"><svg class="w-[17px] h-[17px]" viewBox="0 0 17 17" fill="none" stroke="#d5d8dc"><path d="M.5.500h7v7h-7zM6 16.500h-5L3.500 11z"/><circle cx="13" cy="8" r="3"/></svg></div>
      <div class="w-[22px] bg-[#303846] flex items-center justify-center"><svg class="w-[15px] h-[15px]" viewBox="0 0 15 15" fill="none" stroke="#d5d8dc"><path d="M.5.500h14v14H.5z"/><path d="M8 7l4-4M9 3h3v3M7 8l-4 4M3 9v3h3"/></svg></div>
      <div class="w-[17px] bg-[#303846] flex items-center pl-[2px]"><svg class="w-[15px] h-[15px]" viewBox="0 0 15 15" fill="#d5d8dc"><path d="M0 2h15v2H0zM0 7h15v2H0zM0 12h15v2H0z"/></svg></div>
    </div>
  </footer>
</div>
</body>
</html>
